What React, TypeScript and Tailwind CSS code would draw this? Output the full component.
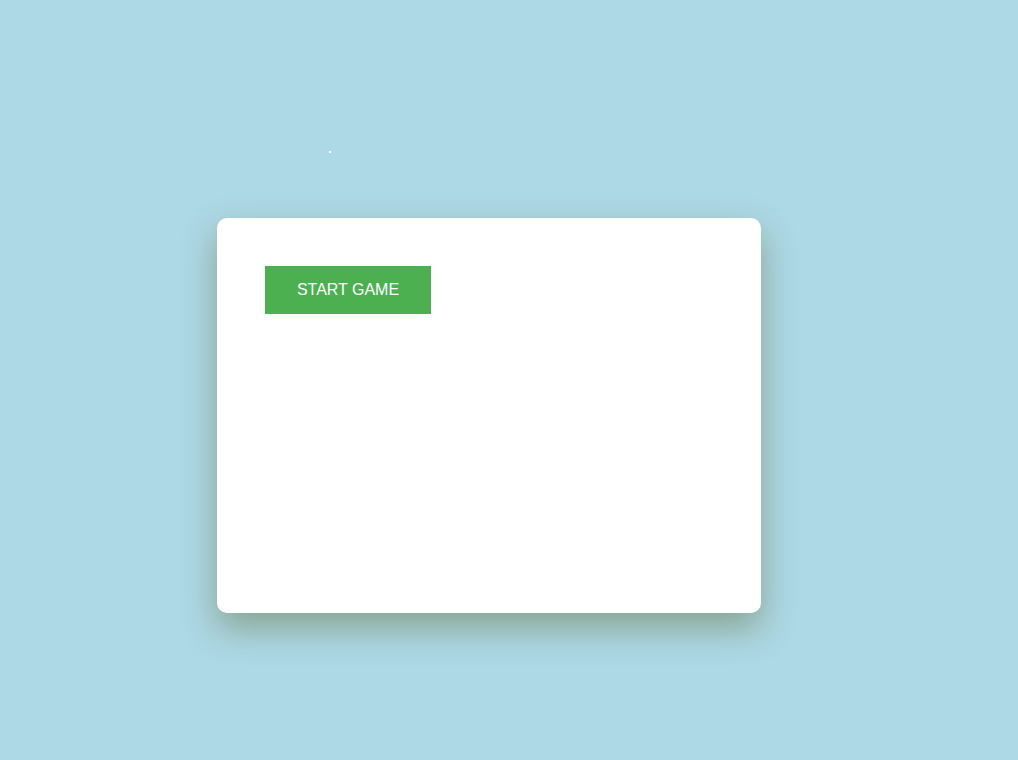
export default function App() {
  return (
    <div className="relative min-h-[760px] w-full bg-[#add8e6] pl-[217px] pt-[218px] font-['Liberation_Sans',Arial,sans-serif]">
      {/* stray particle */}
      <div className="absolute left-[329px] top-[151px] h-[2px] w-[2px] bg-white" />

      <div className="h-[395px] w-[544px] rounded-[10px] bg-white p-12 shadow-[0_15px_35px_rgba(90,100,40,0.45)]">
        <button className="h-12 w-[166px] bg-[#4caf50] text-base leading-[18px] text-white">
          START GAME
        </button>
      </div>
    </div>
  );
}
